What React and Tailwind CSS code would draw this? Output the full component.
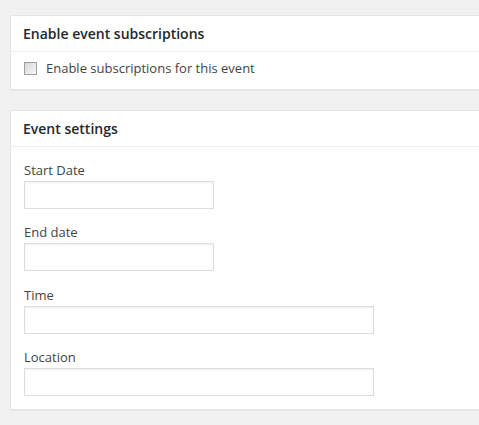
export default function App() {
  const fields = [
    { label: "Start Date", width: "w-[190px]", gap: "" },
    { label: "End date", width: "w-[190px]", gap: "" },
    { label: "Time", width: "w-[350px]", gap: "mt-[1px]" },
    { label: "Location", width: "w-[350px]", gap: "" },
  ];

  return (
    <div className="min-h-[425px] bg-[#f1f1f1] pt-[15px] pl-[10px] font-['Open_Sans',sans-serif] text-[13px] text-[#444]">
      {/* Subscriptions box */}
      <div className="-mr-[10px] border border-[#e5e5e5] bg-white shadow-[0_1px_1px_rgba(0,0,0,0.04)]">
        <h2 className="border-b border-[#eee] px-3 py-2 text-[14px] leading-[19px] font-semibold text-[#23282d]">
          Enable event subscriptions
        </h2>
        <div className="flex items-center gap-[9px] px-[13px] pt-[7px] pb-[12px]">
          <span className="h-[13px] w-[13px] border border-[#a0a0a0] bg-gradient-to-br from-[#d8d8d8] to-[#f6f6f6]" />
          <span className="leading-[18px]">Enable subscriptions for this event</span>
        </div>
      </div>

      {/* Settings box */}
      <div className="mt-[20px] -mr-[10px] border border-[#e5e5e5] bg-white shadow-[0_1px_1px_rgba(0,0,0,0.04)]">
        <h2 className="border-b border-[#eee] px-3 py-2 text-[14px] leading-[19px] font-semibold text-[#23282d]">
          Event settings
        </h2>
        <div className="flex flex-col gap-[14px] px-[13px] pt-[14px] pb-[13px]">
          {fields.map((f) => (
            <div key={f.label} className={`flex flex-col ${f.gap}`}>
              <label className="leading-[18px] text-[#444]">{f.label}</label>
              <div
                className={`mt-[2px] h-[28px] ${f.width} border border-[#ddd] bg-white shadow-[inset_0_1px_2px_rgba(0,0,0,0.07)]`}
              />
            </div>
          ))}
        </div>
      </div>
    </div>
  );
}
